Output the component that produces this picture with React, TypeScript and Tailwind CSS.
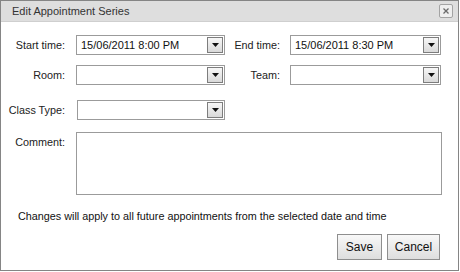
import React from "react";

function DropButton() {
  return (
    <div className="m-[1px] ml-auto flex w-[16px] items-center justify-center border border-[#7d7d7d] bg-gradient-to-b from-[#f7f7f7] to-[#d9d9d9]">
      <svg width="7" height="4" viewBox="0 0 7 4">
        <path d="M0 0h7L3.5 4z" fill="#111" />
      </svg>
    </div>
  );
}

function Select({ value, width }: { value?: string; width: string }) {
  return (
    <div className={`flex h-[20px] border border-[#9b9b9b] bg-white ${width}`}>
      <span className="self-center truncate pl-[4px] text-[11px] text-[#111]">{value}</span>
      <DropButton />
    </div>
  );
}

function Label({ children, width }: { children: React.ReactNode; width: string }) {
  return <div className={`shrink-0 text-right text-[10.8px] text-[#222] ${width}`}>{children}</div>;
}

export default function App() {
  return (
    <div className="h-[272px] w-[460px] bg-white font-['Liberation_Sans',Arial,sans-serif]">
      <div className="flex h-[271px] w-[459px] flex-col border border-[#858585] bg-white">
        <div className="flex h-[21px] shrink-0 items-center justify-between border-b border-[#cfcfcf] bg-[#dedede] pl-[11px] pr-[5px]">
          <span className="text-[11px] text-[#333]">Edit Appointment Series</span>
          <button className="flex h-[14px] w-[14px] items-center justify-center rounded-[2px] border border-[#a3a3a3] bg-[#eeeeee]">
            <svg width="8" height="8" viewBox="0 0 8 8">
              <path d="M1.5 1.5l5 5M6.5 1.5l-5 5" stroke="#6a6a6a" strokeWidth="1.3" />
            </svg>
          </button>
        </div>

        <div className="flex flex-col pt-[13px]">
          <div className="flex items-center">
            <Label width="w-[64px]">Start time:</Label>
            <div className="ml-[11px]">
              <Select value="15/06/2011 8:00 PM" width="w-[149px]" />
            </div>
            <Label width="w-[55px]">End time:</Label>
            <div className="ml-[10px]">
              <Select value="15/06/2011 8:30 PM" width="w-[151px]" />
            </div>
          </div>

          <div className="mt-[10px] flex items-center">
            <Label width="w-[64px]">Room:</Label>
            <div className="ml-[11px]">
              <Select width="w-[149px]" />
            </div>
            <Label width="w-[55px]">Team:</Label>
            <div className="ml-[10px]">
              <Select width="w-[151px]" />
            </div>
          </div>

          <div className="mt-[15px] flex items-center">
            <Label width="w-[64px]">Class Type:</Label>
            <div className="ml-[12px]">
              <Select width="w-[148px]" />
            </div>
          </div>

          <div className="mt-[12px] flex items-start">
            <Label width="w-[64px]">
              <span className="mt-[2px] block">Comment:</span>
            </Label>
            <textarea className="ml-[11px] h-[63px] w-[366px] resize-none border border-[#9b9b9b] bg-white outline-none" />
          </div>

          <div className="mt-[13px] pl-[17px] text-[10.8px] text-[#111]">
            Changes will apply to all future appointments from the selected date and time
          </div>

          <div className="mt-[10px] flex justify-end gap-[5px] pr-[18px]">
            <button className="h-[26px] w-[45px] border border-[#8e8e8e] bg-gradient-to-b from-[#f8f8f8] to-[#dedede] text-[12px] text-[#111]">
              Save
            </button>
            <button className="h-[26px] w-[53px] border border-[#8e8e8e] bg-gradient-to-b from-[#f8f8f8] to-[#dedede] text-[12px] text-[#111]">
              Cancel
            </button>
          </div>
        </div>
      </div>
    </div>
  );
}
